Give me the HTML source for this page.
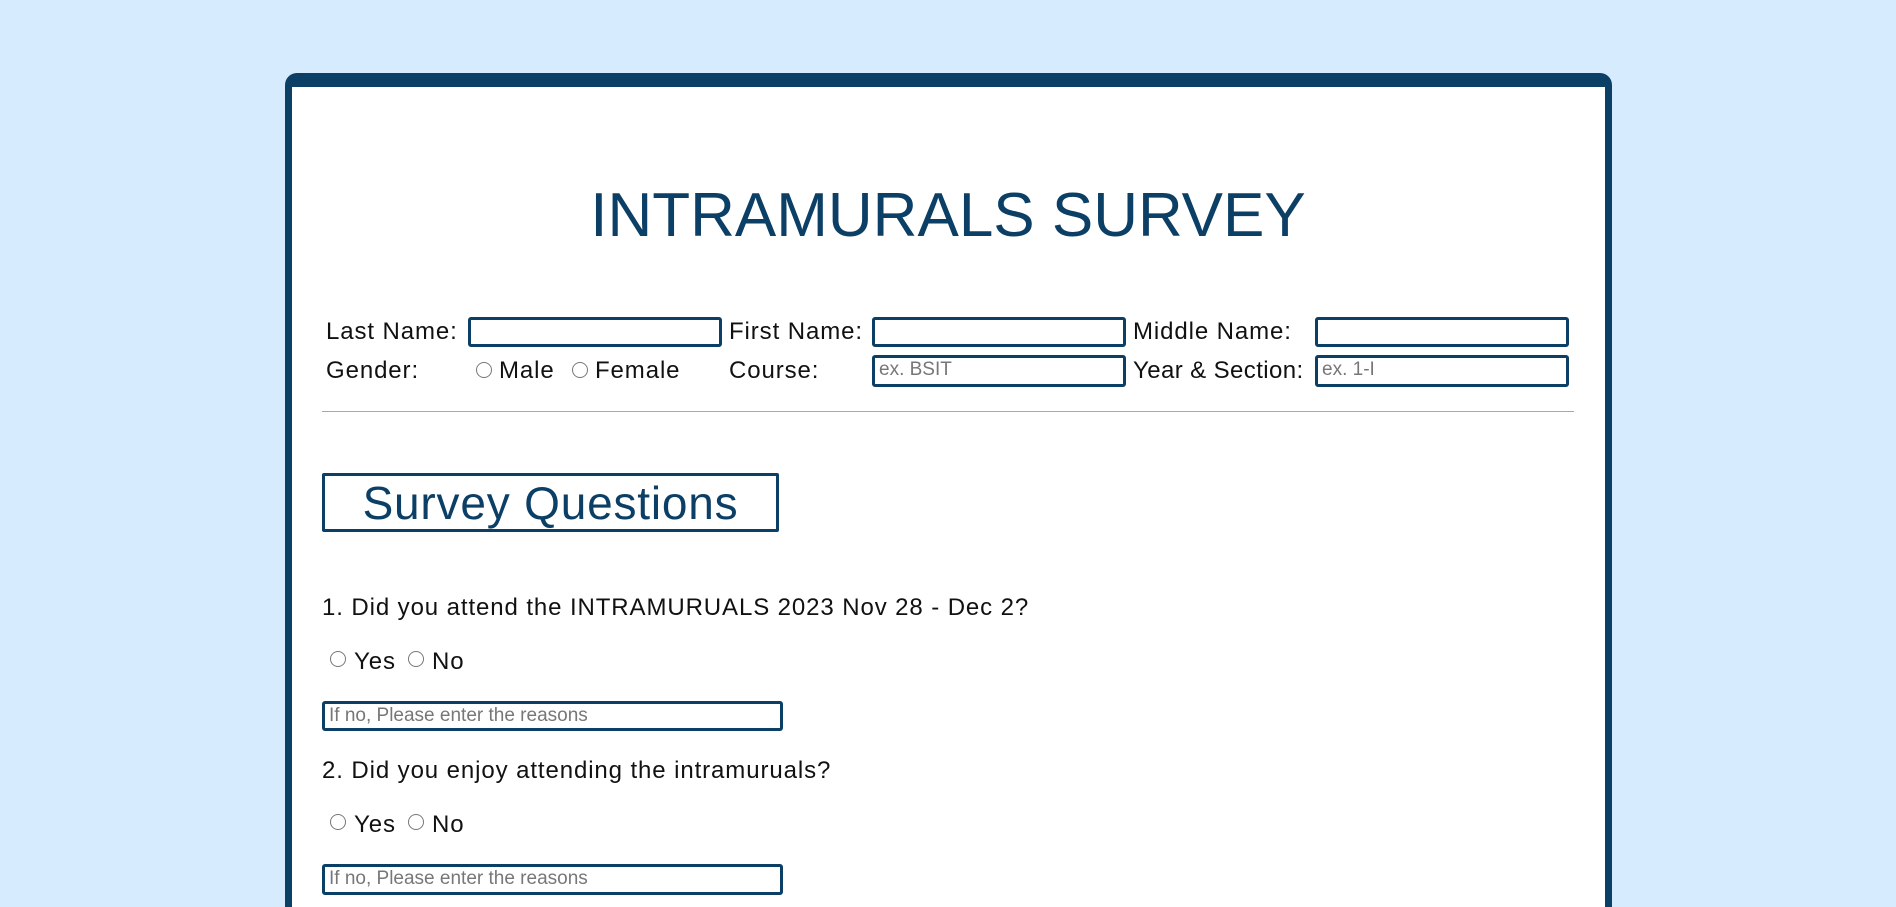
<!DOCTYPE html>
<html><head><meta charset="utf-8"><style>
*{margin:0;padding:0;box-sizing:border-box}
html,body{width:1896px;height:907px;overflow:hidden}
body{background:#d7ebfe;position:relative;font-family:"Liberation Sans",sans-serif;color:#111}
.card{position:absolute;left:285px;top:73px;width:1327px;height:834px;background:#fff;border:7px solid #0b3f66;border-top-width:14px;border-bottom:0;border-radius:12px 12px 0 0}
.t{position:absolute;white-space:nowrap;font-size:24px;letter-spacing:0.9px}
.in{position:absolute;border:3px solid #0b3f66;border-radius:3px;background:#fff;font-size:19px;color:#777;padding-left:4px;line-height:24px}
.r{position:absolute;width:16px;height:16px;border:1px solid #777;border-radius:50%}
</style></head><body>
<div class="card"></div>
<div class="t" style="left:0;width:1896px;text-align:center;top:180px;font-size:62px;letter-spacing:0;color:#0b3f66">INTRAMURALS SURVEY</div>

<div class="t" style="left:326px;top:318px">Last Name:</div>
<div class="in" style="left:468px;top:317px;width:254px;height:30px"></div>
<div class="t" style="left:729px;top:318px">First Name:</div>
<div class="in" style="left:872px;top:317px;width:254px;height:30px"></div>
<div class="t" style="left:1133px;top:318px">Middle Name:</div>
<div class="in" style="left:1315px;top:317px;width:254px;height:30px"></div>

<div class="t" style="left:326px;top:357px">Gender:</div>
<div class="r" style="left:476px;top:362px"></div>
<div class="t" style="left:499px;top:357px">Male</div>
<div class="r" style="left:572px;top:362px"></div>
<div class="t" style="left:595px;top:357px">Female</div>
<div class="t" style="left:729px;top:357px">Course:</div>
<div class="in" style="left:872px;top:355px;width:254px;height:32px">ex. BSIT</div>
<div class="t" style="left:1133px;top:357px;letter-spacing:0.4px">Year &amp; Section:</div>
<div class="in" style="left:1315px;top:355px;width:254px;height:32px">ex. 1-I</div>

<div style="position:absolute;left:322px;top:411px;width:1252px;height:1px;background:#aaa"></div>

<div style="position:absolute;left:322px;top:473px;width:457px;height:59px;border:3px solid #0b3f66;border-radius:2px;color:#0b3f66;font-size:46px;letter-spacing:0.8px;text-align:center;line-height:54px">Survey Questions</div>

<div class="t" style="left:322px;top:594px">1. Did you attend the INTRAMURUALS 2023 Nov 28 - Dec 2?</div>
<div class="r" style="left:330px;top:651px"></div>
<div class="t" style="left:354px;top:648px">Yes</div>
<div class="r" style="left:408px;top:651px"></div>
<div class="t" style="left:432px;top:648px">No</div>
<div class="in" style="left:322px;top:701px;width:461px;height:30px">If no, Please enter the reasons</div>

<div class="t" style="left:322px;top:757px">2. Did you enjoy attending the intramuruals?</div>
<div class="r" style="left:330px;top:814px"></div>
<div class="t" style="left:354px;top:811px">Yes</div>
<div class="r" style="left:408px;top:814px"></div>
<div class="t" style="left:432px;top:811px">No</div>
<div class="in" style="left:322px;top:864px;width:461px;height:31px">If no, Please enter the reasons</div>
</body></html>
